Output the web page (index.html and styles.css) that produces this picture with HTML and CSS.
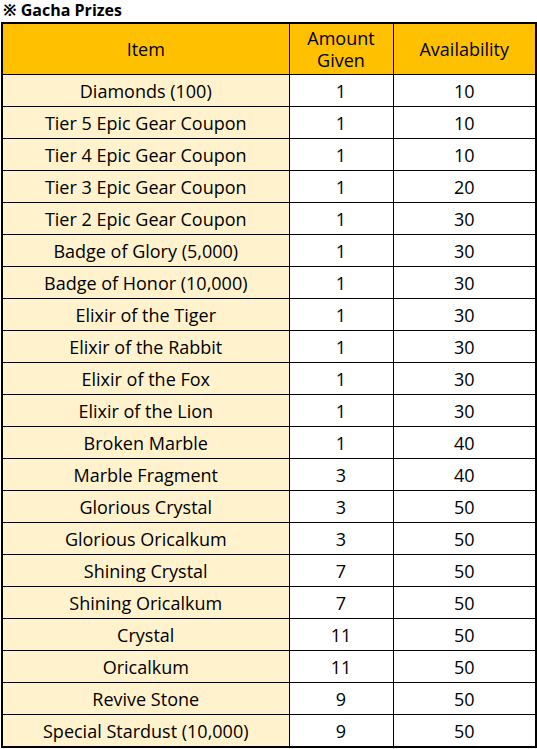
FILE: index.html
```html
<!DOCTYPE html>
<html>
<head>
<meta charset="utf-8">
<link rel="stylesheet" href="styles.css">
</head>
<body>
<div class="title">※ Gacha Prizes</div>
<table class="prizes">
<colgroup><col class="c1"><col class="c2"><col class="c3"></colgroup>
<thead>
<tr><th>Item</th><th>Amount<br>Given</th><th>Availability</th></tr>
</thead>
<tbody>
<tr><td>Diamonds (100)</td><td>1</td><td>10</td></tr>
<tr><td>Tier 5 Epic Gear Coupon</td><td>1</td><td>10</td></tr>
<tr><td>Tier 4 Epic Gear Coupon</td><td>1</td><td>10</td></tr>
<tr><td>Tier 3 Epic Gear Coupon</td><td>1</td><td>20</td></tr>
<tr><td>Tier 2 Epic Gear Coupon</td><td>1</td><td>30</td></tr>
<tr><td>Badge of Glory (5,000)</td><td>1</td><td>30</td></tr>
<tr><td>Badge of Honor (10,000)</td><td>1</td><td>30</td></tr>
<tr><td>Elixir of the Tiger</td><td>1</td><td>30</td></tr>
<tr><td>Elixir of the Rabbit</td><td>1</td><td>30</td></tr>
<tr><td>Elixir of the Fox</td><td>1</td><td>30</td></tr>
<tr><td>Elixir of the Lion</td><td>1</td><td>30</td></tr>
<tr><td>Broken Marble</td><td>1</td><td>40</td></tr>
<tr><td>Marble Fragment</td><td>3</td><td>40</td></tr>
<tr><td>Glorious Crystal</td><td>3</td><td>50</td></tr>
<tr><td>Glorious Oricalkum</td><td>3</td><td>50</td></tr>
<tr><td>Shining Crystal</td><td>7</td><td>50</td></tr>
<tr><td>Shining Oricalkum</td><td>7</td><td>50</td></tr>
<tr><td>Crystal</td><td>11</td><td>50</td></tr>
<tr><td>Oricalkum</td><td>11</td><td>50</td></tr>
<tr><td>Revive Stone</td><td>9</td><td>50</td></tr>
<tr><td>Special Stardust (10,000)</td><td>9</td><td>50</td></tr>
</tbody>
</table>
</body>
</html>
```
FILE: styles.css
```css
html, body {
  margin: 0;
  padding: 0;
  background: #ffffff;
}
body {
  font-family: "Open Sans", "Noto Sans", sans-serif;
  color: #000000;
}
.title {
  font-weight: bold;
  font-size: 16px;
  line-height: 20px;
  height: 22px;
  padding-left: 3px;
}
.prizes {
  border-collapse: collapse;
  margin-left: 1px;
  width: 534px;
  table-layout: fixed;
  border: 2px solid #000;
  font-size: 18px;
}
.c1 { width: 287px; }
.c2 { width: 104px; }
.c3 { width: 143px; }
.prizes th, .prizes td {
  border: 1px solid #000;
  text-align: center;
  padding: 0;
  vertical-align: middle;
}
.prizes th {
  background: #ffc000;
  font-weight: normal;
  height: 50px;
  line-height: 22px;
}
.prizes td {
  height: 31px;
  line-height: 20px;
}
.prizes td:first-child {
  background: #fff2cc;
}
```
